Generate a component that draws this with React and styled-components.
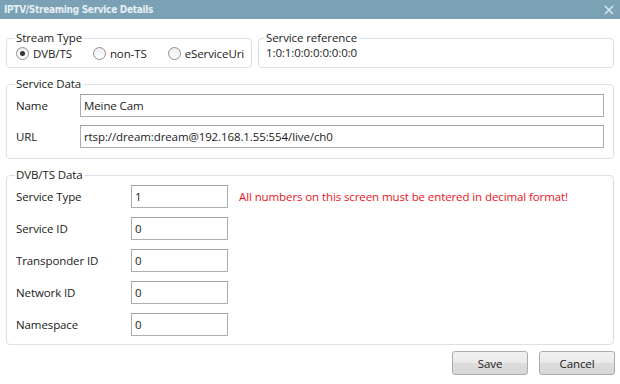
import React, { useState } from 'react';
import styled, { createGlobalStyle } from 'styled-components';

const GlobalStyle = createGlobalStyle`
  html, body {
    margin: 0;
    padding: 0;
    background: #ffffff;
  }
  body {
    font-family: 'Open Sans', 'Noto Sans', sans-serif;
    font-size: 11.5px;
    letter-spacing: -0.1px;
    color: #1a1a1a;
  }
`;

const Window = styled.div`
  width: 620px;
  height: 384px;
  background: #ffffff;
  display: flex;
  flex-direction: column;
  overflow: hidden;
`;

const TitleBar = styled.div`
  height: 19px;
  background: #7aa1b4;
  display: flex;
  align-items: center;
  justify-content: space-between;
  padding: 0 6px 0 4px;
`;

const Title = styled.span`
  color: #e6f0f5;
  font-family: 'DejaVu Sans Condensed', 'DejaVu Sans', sans-serif;
  font-weight: bold;
  font-size: 10px;
  letter-spacing: -0.3px;
`;

const Close = styled.svg`
  width: 10px;
  height: 10px;
`;

const Body = styled.div`
  display: flex;
  flex-direction: column;
  gap: 9px;
  padding: 12px 6px 0 6px;
`;

const Row = styled.div`
  display: flex;
  gap: 6px;
`;

const Group = styled.fieldset`
  margin: 0;
  padding: 0 ${(p) => p.$right || 8}px ${(p) => p.$bottom}px ${(p) => p.$left || 9}px;
  border: 1px solid #d9e1e6;
  border-radius: 4px;
  min-width: 0;
  flex: ${(p) => (p.$width ? `0 0 ${p.$width}px` : '1')};
  box-sizing: border-box;
`;

const Legend = styled.legend`
  padding: 0 2px 0 1px;
  margin-left: -1px;
  height: 14px;
  line-height: 14px;
  color: #1a1a1a;
`;

const RadioRow = styled.div`
  display: flex;
  align-items: center;
  gap: 21px;
  height: 16px;
  white-space: nowrap;
`;

const RadioLabel = styled.label`
  display: flex;
  align-items: center;
  flex: 0 0 auto;
  gap: 4px;
  cursor: pointer;
`;

const RadioDot = styled.span`
  width: 11px;
  height: 11px;
  border: 1px solid #8f8f8f;
  border-radius: 50%;
  background: linear-gradient(#ececec, #ffffff);
  display: flex;
  align-items: center;
  justify-content: center;
  &::after {
    content: '';
    width: 5px;
    height: 5px;
    border-radius: 50%;
    background: ${(p) => (p.$on ? '#333333' : 'transparent')};
  }
`;

const RefText = styled.div`
  height: 16px;
  line-height: 16px;
`;

const FieldRows = styled.div`
  display: flex;
  flex-direction: column;
  gap: ${(p) => p.$gap}px;
  padding-top: 3px;
`;

const FieldRow = styled.div`
  display: flex;
  align-items: center;
`;

const Label = styled.span`
  width: ${(p) => p.$width}px;
  flex: 0 0 auto;
`;

const Input = styled.input`
  height: 23px;
  box-sizing: border-box;
  border: 1px solid #abadb3;
  border-top-color: #a0a0a0;
  padding: 0 3px;
  font-family: 'Open Sans', 'Noto Sans', sans-serif;
  font-size: 11.5px;
  letter-spacing: -0.1px;
  color: #1a1a1a;
  width: ${(p) => (p.$width ? `${p.$width}px` : 'auto')};
  flex: ${(p) => (p.$width ? '0 0 auto' : '1')};
  margin-right: ${(p) => (p.$width ? 0 : 1)}px;
  outline: none;
`;

const Warning = styled.span`
  color: #e8141c;
  margin-left: 11px;
`;

const Footer = styled.div`
  display: flex;
  justify-content: flex-end;
  gap: 11px;
  margin: -3px -1px 0 0;
`;

const Button = styled.button`
  width: 76px;
  height: 24px;
  border: 1px solid #acacac;
  border-radius: 3px;
  background: linear-gradient(#f2f2f2, #e9e9e9 50%, #dcdcdc 51%, #d8d8d8);
  font-family: 'Open Sans', 'Noto Sans', sans-serif;
  font-size: 11.5px;
  letter-spacing: -0.1px;
  color: #1a1a1a;
  cursor: pointer;
`;

const streamTypes = ['DVB/TS', 'non-TS', 'eServiceUri'];

const dvbFields = [
  ['Service Type', '1'],
  ['Service ID', '0'],
  ['Transponder ID', '0'],
  ['Network ID', '0'],
  ['Namespace', '0'],
];

export default function App() {
  const [stream, setStream] = useState('DVB/TS');

  return (
    <Window>
      <GlobalStyle />
      <TitleBar>
        <Title>IPTV/Streaming Service Details</Title>
        <Close viewBox="0 0 10 10">
          <path d="M1 1 L9 9 M9 1 L1 9" stroke="#d8e6ed" strokeWidth="1.6" />
        </Close>
      </TitleBar>
      <Body>
        <Row>
          <Group $width={246} $bottom={6} $right={2}>
            <Legend>Stream Type</Legend>
            <RadioRow>
              {streamTypes.map((t) => (
                <RadioLabel key={t} onClick={() => setStream(t)}>
                  <RadioDot $on={stream === t} />
                  {t}
                </RadioLabel>
              ))}
            </RadioRow>
          </Group>
          <Group $bottom={6} $left={7}>
            <Legend>Service reference</Legend>
            <RefText>1:0:1:0:0:0:0:0:0:0</RefText>
          </Group>
        </Row>
        <Group $bottom={10}>
          <Legend>Service Data</Legend>
          <FieldRows $gap={8}>
            <FieldRow>
              <Label $width={64}>Name</Label>
              <Input defaultValue="Meine Cam" />
            </FieldRow>
            <FieldRow>
              <Label $width={64}>URL</Label>
              <Input defaultValue="rtsp://dream:dream@192.168.1.55:554/live/ch0" />
            </FieldRow>
          </FieldRows>
        </Group>
        <Group $bottom={8}>
          <Legend>DVB/TS Data</Legend>
          <FieldRows $gap={9}>
            {dvbFields.map(([label, value], i) => (
              <FieldRow key={label}>
                <Label $width={115}>{label}</Label>
                <Input $width={97} defaultValue={value} />
                {i === 0 && (
                  <Warning>All numbers on this screen must be entered in decimal format!</Warning>
                )}
              </FieldRow>
            ))}
          </FieldRows>
        </Group>
        <Footer>
          <Button>Save</Button>
          <Button>Cancel</Button>
        </Footer>
      </Body>
    </Window>
  );
}
